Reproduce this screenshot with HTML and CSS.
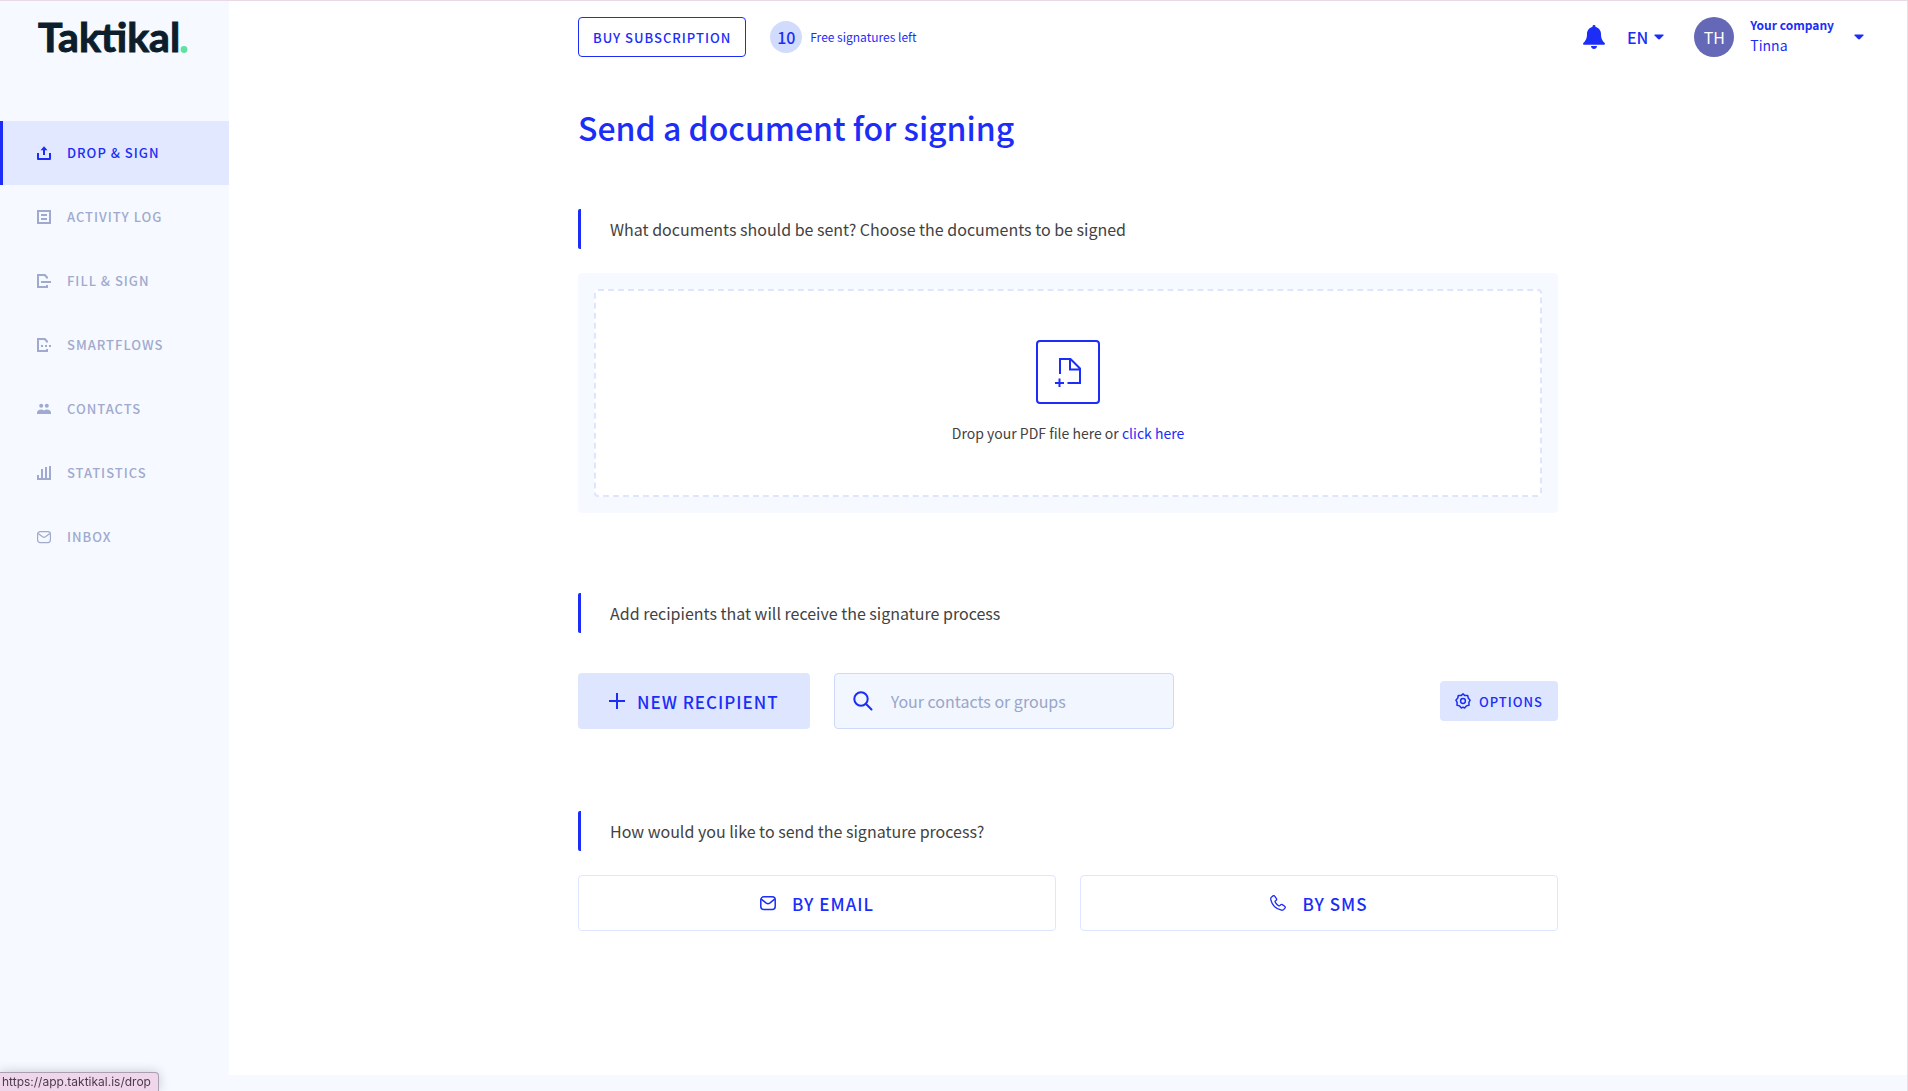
FILE: index.html
```html
<!DOCTYPE html>
<html lang="en">
<head>
    <meta charset="UTF-8">
    <meta name="viewport" content="width=device-width, initial-scale=1.0">
    <title>Taktikal - Drop &amp; Sign</title>
    <link rel="stylesheet" href="styles.css">
</head>
<body>
    <aside class="sidebar">
        <a href="#" class="logo" aria-label="Taktikal">
            <svg width="160" height="64" viewBox="0 0 160 64">
                <text x="1" y="45" class="logo-text">Taktikal</text>
                <rect x="57" y="24" width="31" height="4" class="logo-bar"/>
                <circle cx="147" cy="42.500" r="3.400" class="logo-dot"/>
            </svg>
        </a>
        <nav class="menu">
            <a href="#" class="menu-item active">
                <svg class="icon" viewBox="0 0 14 14"><path d="M1 7v6h12V7M7 9V2" fill="none" stroke="currentColor" stroke-width="2" stroke-linejoin="round"/><path d="M3.500 4.200L7 .2l3.500 4z" fill="currentColor"/></svg>
                Drop &amp; Sign
            </a>
            <a href="#" class="menu-item">
                <svg class="icon" viewBox="0 0 14 14"><path d="M1 1h12v12H1zM4 5h6M4 9h6" fill="none" stroke="currentColor" stroke-width="2"/></svg>
                Activity log
            </a>
            <a href="#" class="menu-item">
                <svg class="icon" viewBox="0 0 14 14"><path d="M10 4.500V3.500L7.800 1H1v12h9v-2M4 8h10" fill="none" stroke="currentColor" stroke-width="2"/></svg>
                Fill &amp; Sign
            </a>
            <a href="#" class="menu-item">
                <svg class="icon" viewBox="0 0 14 14"><path d="M10 4.500V3.500L7.800 1H1v12h9v-2M4 8h2M8 8h2M12 8h2" fill="none" stroke="currentColor" stroke-width="2"/></svg>
                Smartflows
            </a>
            <a href="#" class="menu-item">
                <svg class="icon" viewBox="0 0 14 14" fill="currentColor"><circle cx="4.200" cy="3.700" r="2"/><circle cx="9.800" cy="3.700" r="2"/><path d="M0 12V10.500C.3 8.500 2 7.500 4 7.500c1.200 0 2.200.3 3 .9.800-.6 1.800-.9 3-.9 2 0 3.700 1 4 3V12z"/></svg>
                Contacts
            </a>
            <a href="#" class="menu-item">
                <svg class="icon" viewBox="0 0 14 14"><path d="M1 9v4h12V0M5 13V3M9 13V1" fill="none" stroke="currentColor" stroke-width="2"/></svg>
                Statistics
            </a>
            <a href="#" class="menu-item">
                <svg class="icon" viewBox="0 0 14 14"><rect x=".6" y="1.600" width="12.800" height="11" rx="2.500" fill="none" stroke="currentColor" stroke-width="1.200"/><path d="M1.200 3.500L5.500 6.800q1.500 1 3 0l4.300-3.300" fill="none" stroke="currentColor" stroke-width="1.200"/></svg>
                Inbox
            </a>
        </nav>
    </aside>

    <div class="page">
        <header class="topbar">
            <div class="topbar-plan">
                <button type="button" class="btn btn-outline">Buy subscription</button>
                <span class="count">10</span>
                <span class="count-label">Free signatures left</span>
            </div>
            <div class="topbar-user">
                <button type="button" class="plain bell" aria-label="Notifications">
                    <svg width="22" height="24" viewBox="0 0 22 24" fill="currentColor"><path d="M11 0c.9 0 1.500.6 1.500 1.400v.5c3.300.7 5.500 3.500 5.500 6.900 0 4.600 1 6.700 3.500 9 .8.900.4 2-.8 2H1.300c-1.200 0-1.600-1.100-.8-2C3 15.500 4 13.400 4 8.800c0-3.400 2.200-6.200 5.500-6.900v-.5C9.500.6 10.100 0 11 0zM8 21h6c-.1 1.800-1.400 3-3 3s-2.900-1.200-3-3z"/></svg>
                </button>
                <button type="button" class="plain lang">EN
                    <svg class="caret" viewBox="0 0 10 6"><path d="M1 .5h8q1 0 .4.900L6 5q-1 .9-2 0L.6 1.400Q0 .5 1 .5z" fill="currentColor"/></svg>
                </button>
                <button type="button" class="plain account">
                    <span class="avatar">TH</span>
                    <span class="account-name"><strong>Your company</strong><span>Tinna</span></span>
                    <svg class="caret" viewBox="0 0 10 6"><path d="M1 .5h8q1 0 .4.900L6 5q-1 .9-2 0L.6 1.400Q0 .5 1 .5z" fill="currentColor"/></svg>
                </button>
            </div>
        </header>

        <main class="content">
            <h1>Send a document for signing</h1>

            <section>
                <h2>What documents should be sent? Choose the documents to be signed</h2>
                <div class="drop-box">
                    <div class="drop-area">
                        <div class="drop-icon">
                            <svg width="26" height="29" viewBox="0 0 26 29" fill="none" stroke="currentColor" stroke-width="2"><path d="M5 16V1h10.500L25 10.500V25H12.500M15 1v10.500h10M4.500 20.500v9M0 25h9"/></svg>
                        </div>
                        <p>Drop your PDF file here or <a href="#">click here</a></p>
                    </div>
                </div>
            </section>

            <section class="recipients">
                <h2>Add recipients that will receive the signature process</h2>
                <div class="recipient-row">
                    <button type="button" class="btn btn-large btn-new">
                        <svg width="16" height="16" viewBox="0 0 16 16"><path d="M8 0v16M0 8h16" stroke="currentColor" stroke-width="2"/></svg>
                        New recipient
                    </button>
                    <label class="search">
                        <svg width="20" height="20" viewBox="0 0 20 20" fill="none" stroke="currentColor" stroke-width="2"><circle cx="8" cy="8" r="6.700"/><path d="M12.800 12.800L18.500 18.500" stroke-linecap="round"/></svg>
                        <input type="text" placeholder="Your contacts or groups" aria-label="Your contacts or groups">
                    </label>
                    <button type="button" class="btn btn-options">
                        <svg width="16" height="16" viewBox="0 0 16 16" fill="none" stroke="currentColor" stroke-width="1.500"><path d="M8 .9L9.900 2.600 12.700 2.500 13.200 5 15.100 7.200 13.900 9.400 14 12.200 11.400 12.900 9.600 15 8 14.200 6.400 15 4.600 12.900 2 12.200 2.100 9.400.9 7.200 2.800 5 3.300 2.500 6.100 2.600z" stroke-linejoin="round"/><circle cx="8" cy="8" r="2.400"/></svg>
                        Options
                    </button>
                </div>
            </section>

            <section class="delivery">
                <h2>How would you like to send the signature process?</h2>
                <div class="delivery-row">
                    <button type="button" class="btn btn-large btn-light">
                        <svg width="16" height="16" viewBox="0 0 16 16" fill="none" stroke="currentColor" stroke-width="1.500"><rect x=".8" y="1.800" width="14.400" height="12.600" rx="3"/><path d="M1.300 4.200l5 3.900q1.700 1.200 3.400 0l5-3.900"/></svg>
                        By email
                    </button>
                    <button type="button" class="btn btn-large btn-light">
                        <svg width="16" height="16" viewBox="0 0 16 16" fill="none" stroke="currentColor" stroke-width="1.300"><path d="M1.600 2L3 .9c.6-.4 1.300-.3 1.700.3L6.400 3.600c.4.600.3 1.200-.2 1.600l-.7.600c-.5.4-.5 1-.2 1.500.8 1.300 1.900 2.500 3.300 3.400.5.300 1.100.2 1.500-.3l.6-.6c.5-.5 1.100-.5 1.600-.2l2.400 1.700c.6.400.8 1.100.4 1.600l-1.200 1.500c-.6.700-1.500 1-2.500.8C6.300 14 2 9.800.8 4.600.6 3.600.8 2.600 1.600 2z"/></svg>
                        By SMS
                    </button>
                </div>
            </section>
        </main>
    </div>

    <div class="status-link">https://app.taktikal.is/drop</div>
</body>
</html>
```
FILE: styles.css
```css
* {
    box-sizing: border-box;
}
body {
    margin: 0;
    min-height: 100vh;
    display: flex;
    background-color: #f6f9ff;
    border-top: 1px solid #e8d9e4;
    border-right: 1px solid #e4e0e6;
    color: #424242;
    font-family: "Noto Sans CJK JP", "Noto Sans", sans-serif;
    font-size: 14px;
    line-height: 20px;
}
a {
    color: #1b2df7;
    text-decoration: none;
}
button {
    font-family: inherit;
    cursor: pointer;
}
.sidebar {
    width: 229px;
    flex-shrink: 0;
}
.logo {
    display: block;
    height: 120px;
    padding: 6px 0 0 37px;
}
.logo-text {
    font-family: Lato, sans-serif;
    font-size: 41px;
    font-weight: bold;
    fill: #0c1e2c;
    stroke: #0c1e2c;
    stroke-width: 1px;
}
.logo-bar {
    fill: #0c1e2c;
}
.logo-dot {
    fill: #5ee2a0;
}
.menu-item {
    height: 64px;
    padding-left: 34px;
    border-left: 3px solid transparent;
    display: flex;
    align-items: center;
    gap: 16px;
    color: #9faace;
    font-size: 13px;
    font-weight: 500;
    letter-spacing: 1px;
    text-transform: uppercase;
}
.menu-item.active {
    background-color: #e1e8ff;
    border-left-color: #1b2df7;
    color: #1b2df7;
}
.icon {
    width: 14px;
    height: 14px;
}
.page {
    flex: 1;
    margin-bottom: 16px;
    background-color: white;
}
.topbar {
    display: grid;
    grid-template-columns: 1fr min(980px, 60%) 1fr;
    align-items: center;
    padding-top: 16px;
    color: #1b2df7;
}
.topbar-plan {
    grid-column: 2;
    grid-row: 1;
    display: flex;
    align-items: center;
}
.topbar-user {
    grid-column: 2 / 4;
    grid-row: 1;
    justify-self: end;
    display: flex;
    align-items: center;
    padding-right: 43px;
}
.btn {
    height: 40px;
    padding: 0 14px;
    border: 1px solid transparent;
    border-radius: 4px;
    display: flex;
    align-items: center;
    justify-content: center;
    color: #1b2df7;
    font-size: 13px;
    font-weight: 500;
    letter-spacing: 1px;
    text-transform: uppercase;
}
.btn-outline {
    margin-right: 24px;
    background-color: white;
    border-color: #1b2df7;
}
.btn-large {
    height: 56px;
    font-size: 17px;
}
.count {
    width: 32px;
    height: 32px;
    margin-right: 8px;
    border-radius: 50%;
    background-color: #d1dcfd;
    display: flex;
    align-items: center;
    justify-content: center;
    font-size: 16px;
    font-weight: 500;
}
.count-label {
    font-size: 12px;
}
.plain {
    padding: 0;
    border: none;
    background: none;
    display: flex;
    align-items: center;
    color: #1b2df7;
}
.bell {
    margin-right: 22px;
}
.lang {
    margin-right: 30px;
    gap: 6px;
    font-size: 16px;
    font-weight: 500;
}
.account {
    height: 40px;
}
.caret {
    width: 10px;
    height: 6px;
}
.avatar {
    width: 40px;
    height: 40px;
    margin-right: 16px;
    border-radius: 50%;
    background-color: #6567b7;
    color: white;
    display: flex;
    align-items: center;
    justify-content: center;
    font-size: 16px;
}
.account-name {
    margin-right: 20px;
    padding-bottom: 4px;
    display: flex;
    flex-direction: column;
    font-size: 14px;
    line-height: 20px;
    text-align: left;
}
.account-name strong {
    font-size: 12px;
    font-weight: bold;
}
.content {
    width: 60%;
    min-width: 760px;
    max-width: 980px;
    margin: 0 auto;
    padding-top: 46px;
}
h1 {
    margin: 0 0 58px;
    color: #1b2df7;
    font-size: 32px;
    font-weight: 500;
    line-height: 48px;
}
h2 {
    margin: 0 0 24px;
    padding-left: 29px;
    border-left: 3px solid #1b2df7;
    border-radius: 2px;
    font-size: 16px;
    font-weight: normal;
    line-height: 40px;
}
.drop-box {
    padding: 16px;
    border-radius: 4px;
    background-color: #f6f9ff;
}
.drop-area {
    padding: 49px 16px 52px;
    border: 2px dashed #dee6ff;
    border-radius: 4px;
    background-color: white;
    text-align: center;
}
.drop-area p {
    margin: 19px 0 0;
}
.drop-icon {
    width: 64px;
    height: 64px;
    margin: 0 auto;
    border: 2px solid #1b2df7;
    border-radius: 4px;
    display: flex;
    align-items: center;
    justify-content: center;
    color: #1b2df7;
}
.recipients {
    margin-top: 80px;
}
.recipient-row {
    margin-top: 40px;
    display: flex;
    align-items: center;
}
.btn-new {
    padding: 0 30px;
    gap: 12px;
    background-color: #dee6ff;
}
.search {
    width: 340px;
    height: 56px;
    margin-left: 24px;
    padding: 0 18px;
    border: 1px solid #cfdafb;
    border-radius: 4px;
    background-color: #f1f6ff;
    display: flex;
    align-items: center;
    gap: 18px;
    color: #1b2df7;
}
.search input {
    flex: 1;
    min-width: 0;
    padding: 0;
    border: none;
    outline: none;
    background: none;
    font-family: inherit;
    font-size: 16px;
}
.search input::placeholder {
    color: #9aa5c8;
}
.btn-options {
    margin-left: auto;
    gap: 8px;
    background-color: #dee6ff;
}
.delivery {
    margin-top: 82px;
}
.delivery-row {
    display: grid;
    grid-template-columns: 1fr 1fr;
    gap: 24px;
}
.btn-light {
    gap: 16px;
    background-color: white;
    border-color: #dfe6ff;
}
.status-link {
    position: fixed;
    left: 0;
    bottom: 0;
    padding: 0 7px 0 2px;
    border-top: 1px solid #aaa0ad;
    border-right: 1px solid #aaa0ad;
    border-radius: 0 4px 0 0;
    background-color: #f0d6eb;
    box-shadow: 0 0 12px rgba(0, 0, 0, 0.2);
    color: #4a3b49;
    font-family: Inter, sans-serif;
    font-size: 12px;
    line-height: 18px;
}
```
